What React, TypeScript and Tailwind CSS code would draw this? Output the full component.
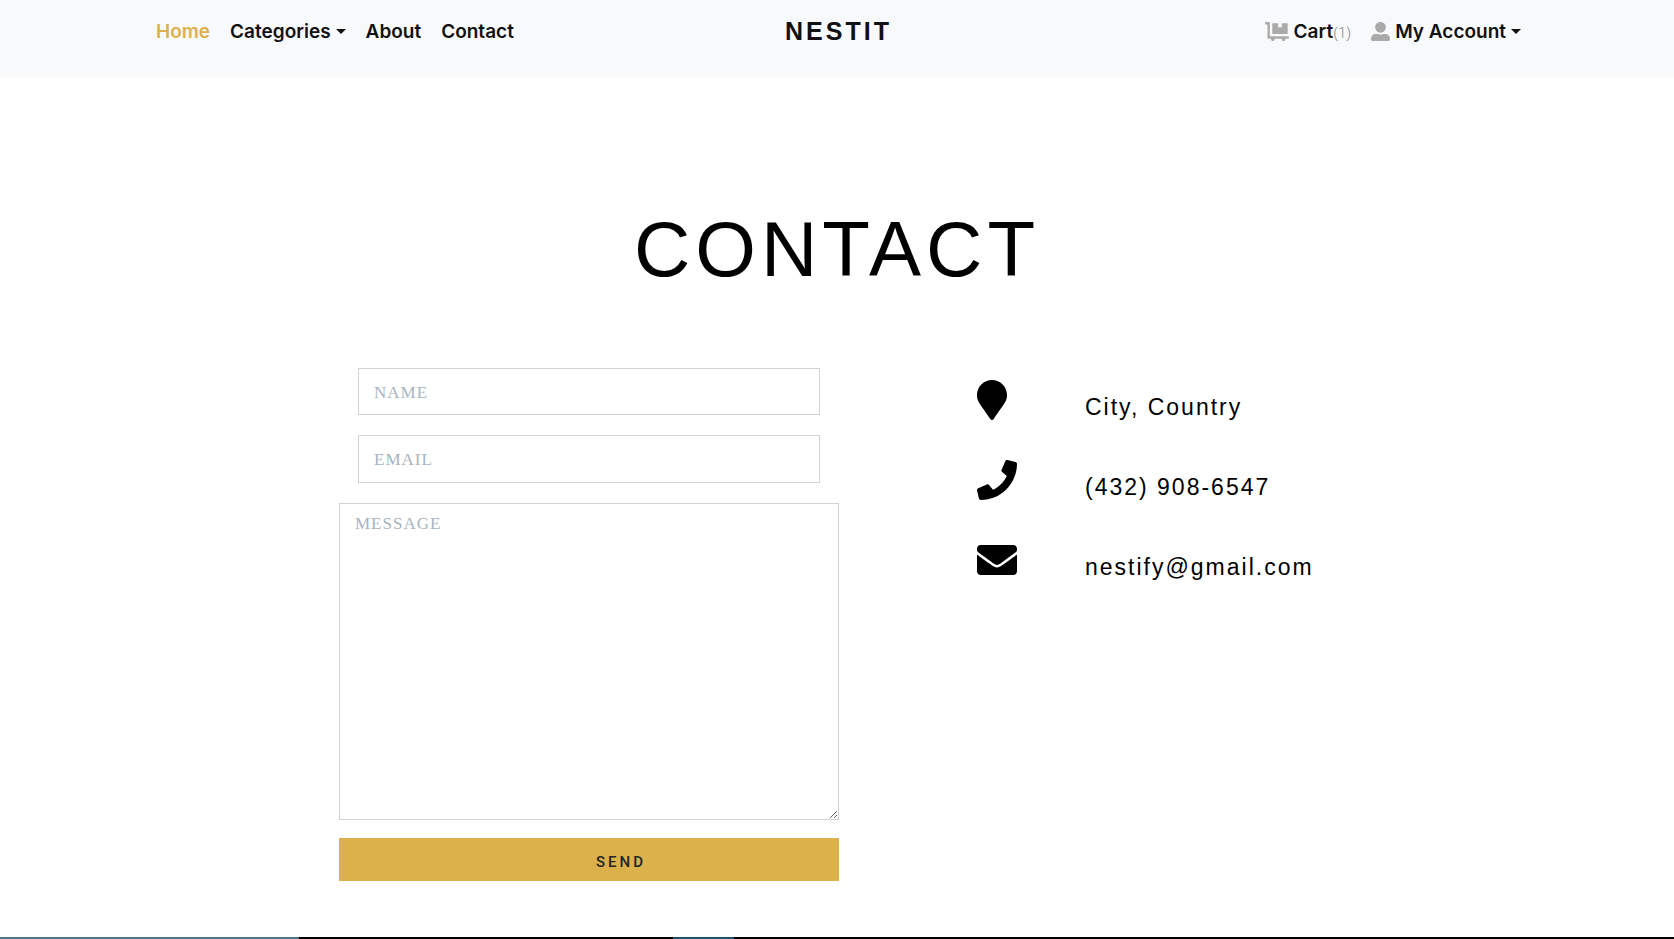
import React from "react";
import type { ReactNode } from "react";
import { FaDollyFlatbed, FaEnvelope, FaMapMarker, FaPhone, FaUserAlt } from "react-icons/fa";

function Caret() {
  return (
    <svg viewBox="0 0 10 5" className="h-[5px] w-[10px] fill-current" aria-hidden="true">
      <path d="M0 0h10L5 5z" />
    </svg>
  );
}

const navItem = "flex items-center gap-[5px] whitespace-nowrap";

function Header() {
  return (
    <header className="bg-[#f8f9fb]">
      <nav className="mx-auto grid h-[77px] max-w-[1368px] grid-cols-[1fr_auto_1fr] items-start pl-[3px] pt-[18px] font-['Inter',sans-serif] text-[19px] leading-[27px] font-semibold text-[#111]">
        <div className="flex gap-5">
          <a href="#home" className="text-[#dcb14b]">Home</a>
          <button type="button" className={navItem}>
            Categories
            <Caret />
          </button>
          <a href="#about">About</a>
          <a href="#contact">Contact</a>
        </div>
        <a href="#home" className="font-['Liberation_Sans',sans-serif] text-[25px] font-bold tracking-[3px]">NESTIT</a>
        <div className="flex justify-end gap-5">
          <a href="#cart" className="flex items-center whitespace-nowrap">
            <FaDollyFlatbed className="mr-[5px] h-[19px] w-6 text-[#aaa]" />
            Cart
            <span className="pt-[3px] font-['Roboto'] text-[15px] leading-5 font-light text-[#888]">(1)</span>
          </a>
          <button type="button" className={navItem}>
            <FaUserAlt className="size-[19px] text-[#aaa]" />
            My Account
            <Caret />
          </button>
        </div>
      </nav>
    </header>
  );
}

const field =
  "block border border-[#ced4da] bg-white px-[15px] font-['Liberation_Serif',serif] text-[17px] tracking-[1px] text-[#495057] outline-none placeholder:text-[#a9b4be]";

function ContactForm() {
  return (
    <form className="flex min-w-0 basis-[500px] flex-col" onSubmit={(e) => e.preventDefault()}>
      <div className="flex flex-col gap-5 px-[19px]">
        <input type="text" aria-label="Name" placeholder="NAME" className={`${field} h-[47px] w-full pt-[2px]`} />
        <input type="email" aria-label="Email" placeholder="EMAIL" className={`${field} h-[48px] w-full pt-[2px]`} />
      </div>
      <textarea
        aria-label="Message"
        placeholder="MESSAGE"
        className={`${field} mt-5 h-[317px] w-full resize py-2 leading-[24px]`}
      />
      <button
        type="submit"
        className="mt-[18px] h-[43px] bg-[#dcb14b] pl-[64px] pt-[6px] font-['Roboto'] text-[15px] font-medium tracking-[3px] text-[#212529]"
      >
        SEND
      </button>
    </form>
  );
}

function ContactLine({ icon, children }: { icon: ReactNode; children: ReactNode }) {
  return (
    <li className="flex h-10 items-end">
      <span className="w-[108px] shrink-0">{icon}</span>
      <span className="text-[23px] leading-[26px] tracking-[2px] whitespace-nowrap">{children}</span>
    </li>
  );
}

export default function App() {
  return (
    <div className="flex min-h-screen flex-col bg-white font-['Liberation_Sans',sans-serif] text-black">
      <Header />
      <main className="flex-1 pt-[132px] pb-14">
        <h1 className="text-center text-[78px] leading-[80px] tracking-[5px]">CONTACT</h1>
        <section className="mx-auto mt-[79px] flex max-w-[996px] gap-[138px]">
          <ContactForm />
          <ul className="flex flex-col gap-10 pt-3">
            <ContactLine icon={<FaMapMarker className="h-10 w-[30px]" />}>City, Country</ContactLine>
            <ContactLine icon={<FaPhone className="size-10" />}>
              <a href="tel:4329086547">(432) 908-6547</a>
            </ContactLine>
            <ContactLine icon={<FaEnvelope className="size-10" />}>
              <a href="mailto:nestify@gmail.com">nestify@gmail.com</a>
            </ContactLine>
          </ul>
        </section>
      </main>
      <footer className="flex h-[2px] bg-black">
        <div className="w-[299px] bg-[#4b7588]" />
        <div className="ml-[374px] w-[61px] bg-[#17536a]" />
      </footer>
    </div>
  );
}
